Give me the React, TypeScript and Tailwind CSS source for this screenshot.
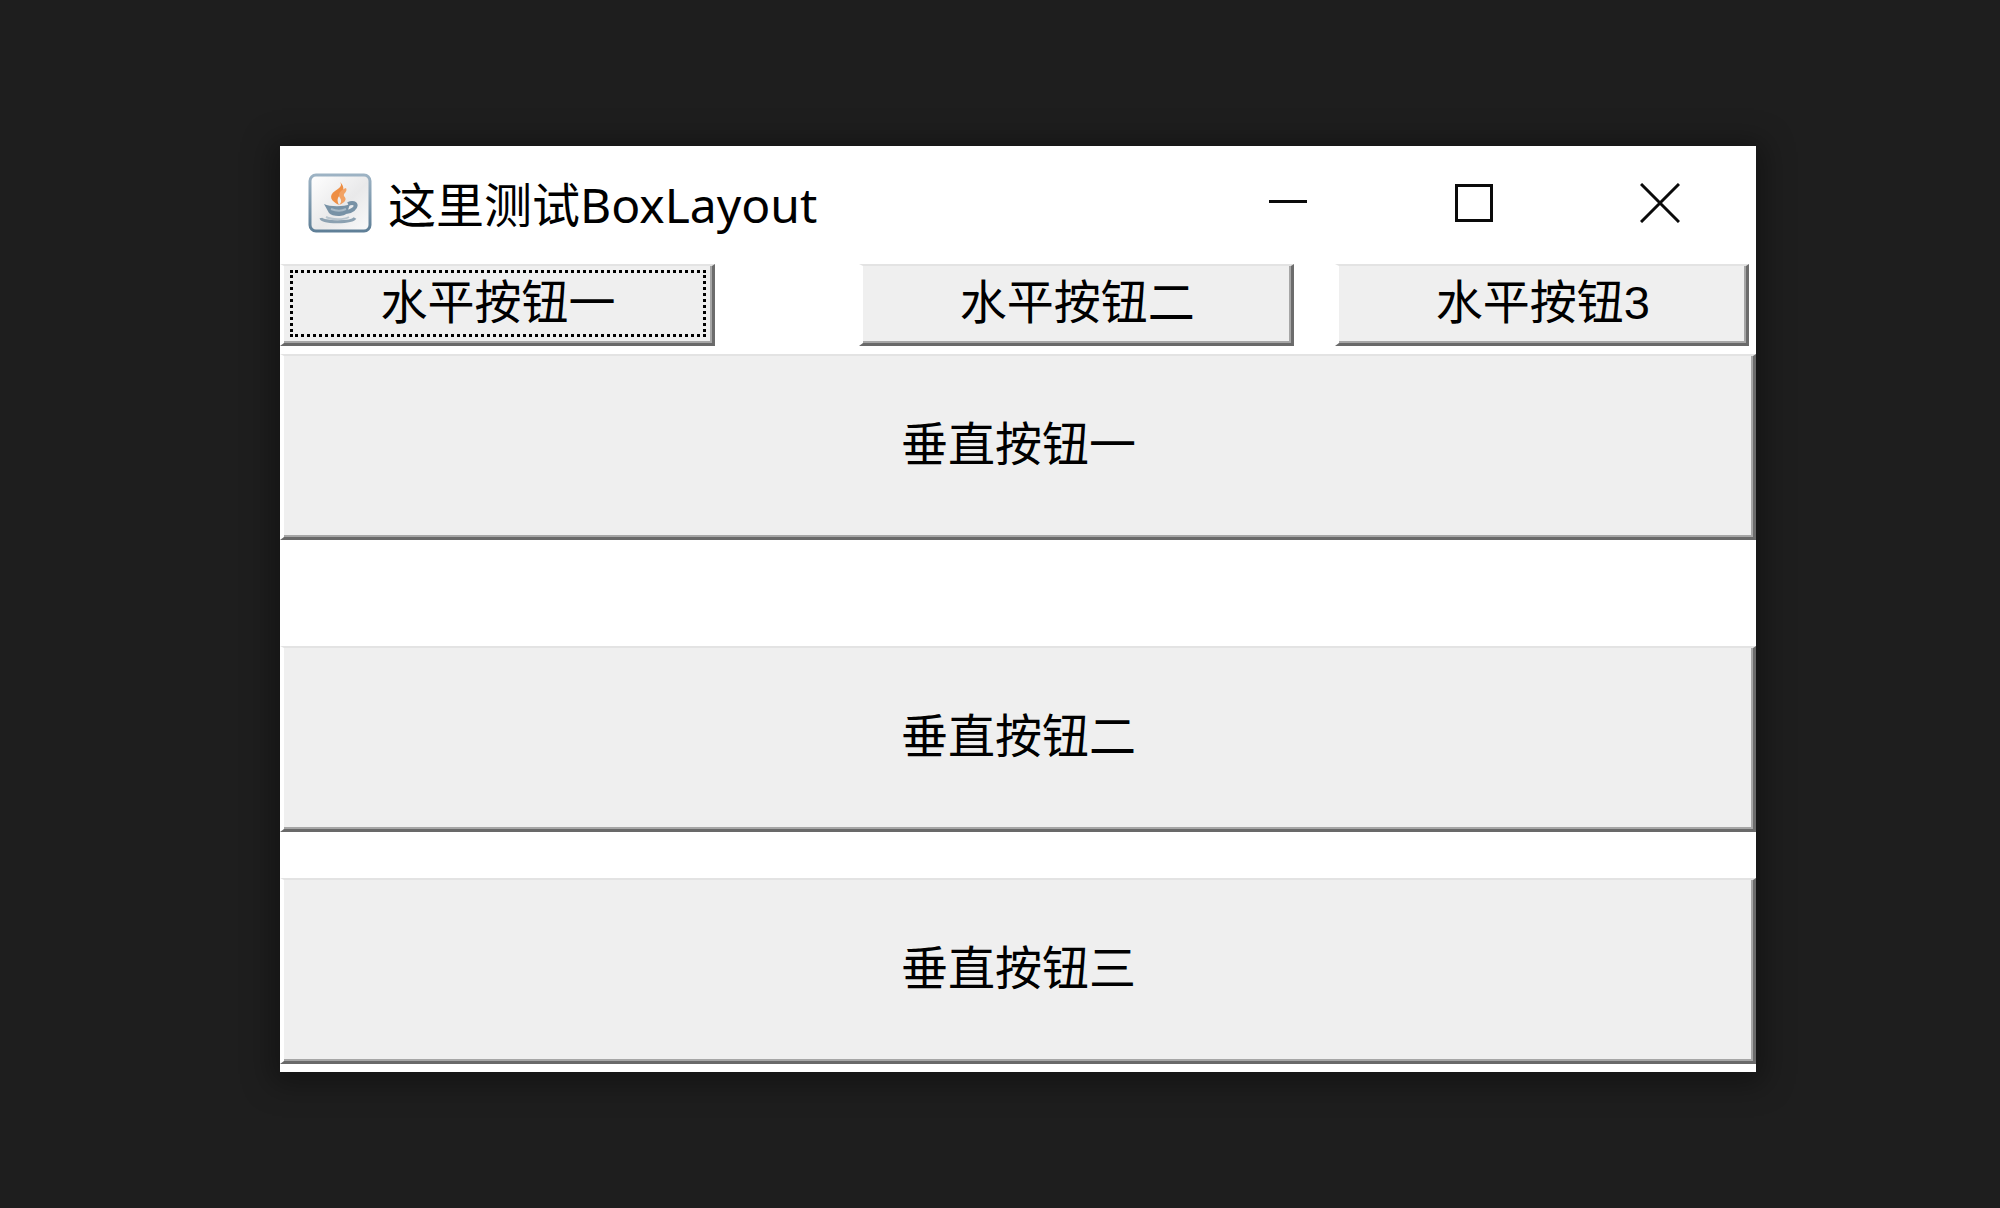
import type { ReactNode } from "react";
import clsx from "clsx";

function JavaIcon() {
  return (
    <svg viewBox="0 0 64 60" className="h-[60px] w-16 shrink-0" aria-hidden="true">
      <defs>
        <linearGradient id="plate" x1="0" y1="0" x2="1" y2="1">
          <stop offset="0" stopColor="#ffffff" />
          <stop offset="0.55" stopColor="#e9e9ea" />
          <stop offset="1" stopColor="#fafafa" />
        </linearGradient>
        <linearGradient id="frame" x1="0" y1="0" x2="0" y2="1">
          <stop offset="0" stopColor="#9db3c4" />
          <stop offset="1" stopColor="#5f7f97" />
        </linearGradient>
      </defs>
      <rect x="2" y="2" width="60" height="56" rx="6" fill="url(#plate)" stroke="url(#frame)" strokeWidth="3" />
      {/* steam */}
      <path
        d="M32 9 C35 13 31 15 27 18 C20 23 23 28 31 32 C29 28 29 25 32 22 C36 18 37 14 32 9 Z"
        fill="#ee8f45"
      />
      <path d="M38 15 C33 17 29 21 32 25 C34 28 33 30 31 32 C38 29 39 26 36 23 C35 20 40 19 38 15 Z" fill="#f2a264" />
      {/* cup */}
      <path d="M16 31 C22 34 36 34 42 31 L39 40 C37 44 24 44 21 40 Z" fill="#7892a6" />
      <path d="M23 36 C28 38 34 38 38 36" fill="none" stroke="#a9bac7" strokeWidth="2" />
      <path d="M40 31 C50 27 51 37 38 39" fill="none" stroke="#7892a6" strokeWidth="4" />
      {/* saucer */}
      <path d="M13 45 C14 50 44 50 47 45" fill="none" stroke="#8ca1b1" strokeWidth="3" />
      <path d="M18 44 C24 47 36 47 41 44" fill="none" stroke="#b9c5ce" strokeWidth="2" />
    </svg>
  );
}

function WindowControl({ label, children }: { label: string; children: ReactNode }) {
  return (
    <button type="button" aria-label={label} className="flex h-full w-[186px] items-center justify-center">
      <svg viewBox="0 0 40 40" className="size-10" fill="none" stroke="#0a0a0a" strokeWidth="3">
        {children}
      </svg>
    </button>
  );
}

function AwtButton({
  children,
  focused = false,
  className,
}: {
  children: ReactNode;
  focused?: boolean;
  className?: string;
}) {
  return (
    <button
      type="button"
      className={clsx(
        "border-t-2 border-r-3 border-b-3 border-l-4 border-t-[#e3e3e3] border-r-[#6c6c6c] border-b-[#696969] border-l-white bg-[#efefef] text-[47px] leading-none text-black",
        className,
      )}
    >
      <span className="flex h-full items-center justify-center border-r-2 border-b-2 border-[#a6a6a6] py-1 pr-1 pl-1.5">
        <span
          className={clsx(
            "flex h-full w-full items-center justify-center pb-0.5",
            focused && "border-3 border-dotted border-black",
          )}
        >
          {children}
        </span>
      </span>
    </button>
  );
}

export default function App() {
  return (
    <div className="min-h-screen bg-[#1e1e1e] pt-[146px] pr-[12.2%] pb-[136px] pl-[14%] font-['Liberation_Sans','Noto_Sans_CJK_SC',sans-serif]">
      <main className="flex flex-col bg-white pb-2 shadow-[0_4px_28px_8px_rgba(0,0,0,0.35)]">
        {/* Title bar */}
        <header className="flex h-[118px] items-center pr-[3px] pb-1 pl-7">
          <JavaIcon />
          <h1 className="ml-4 flex-1 pt-1 font-['Noto_Sans','Noto_Sans_CJK_SC',sans-serif] text-5xl whitespace-nowrap text-black">
            这里测试BoxLayout
          </h1>
          <WindowControl label="Minimize">
            <path d="M1 18.5H39" />
          </WindowControl>
          <WindowControl label="Maximize">
            <rect x="2.5" y="2.5" width="35" height="35" />
          </WindowControl>
          <WindowControl label="Close">
            <path d="M1 1L39 39M39 1L1 39" />
          </WindowControl>
        </header>

        {/* Horizontal box */}
        <div className="flex h-[82px] pr-[7px]">
          <AwtButton focused className="flex-[435]">
            水平按钮一
          </AwtButton>
          <div className="w-36" />
          <AwtButton className="flex-[435]">水平按钮二</AwtButton>
          <div className="w-[41px]" />
          <AwtButton className="flex-[413]">水平按钮3</AwtButton>
        </div>

        {/* Vertical box */}
        <div className="flex flex-col pt-2">
          <AwtButton className="h-[186px]">垂直按钮一</AwtButton>
          <div className="h-[106px]" />
          <AwtButton className="h-[186px]">垂直按钮二</AwtButton>
          <div className="h-[46px]" />
          <AwtButton className="h-[186px]">垂直按钮三</AwtButton>
        </div>
      </main>
    </div>
  );
}
